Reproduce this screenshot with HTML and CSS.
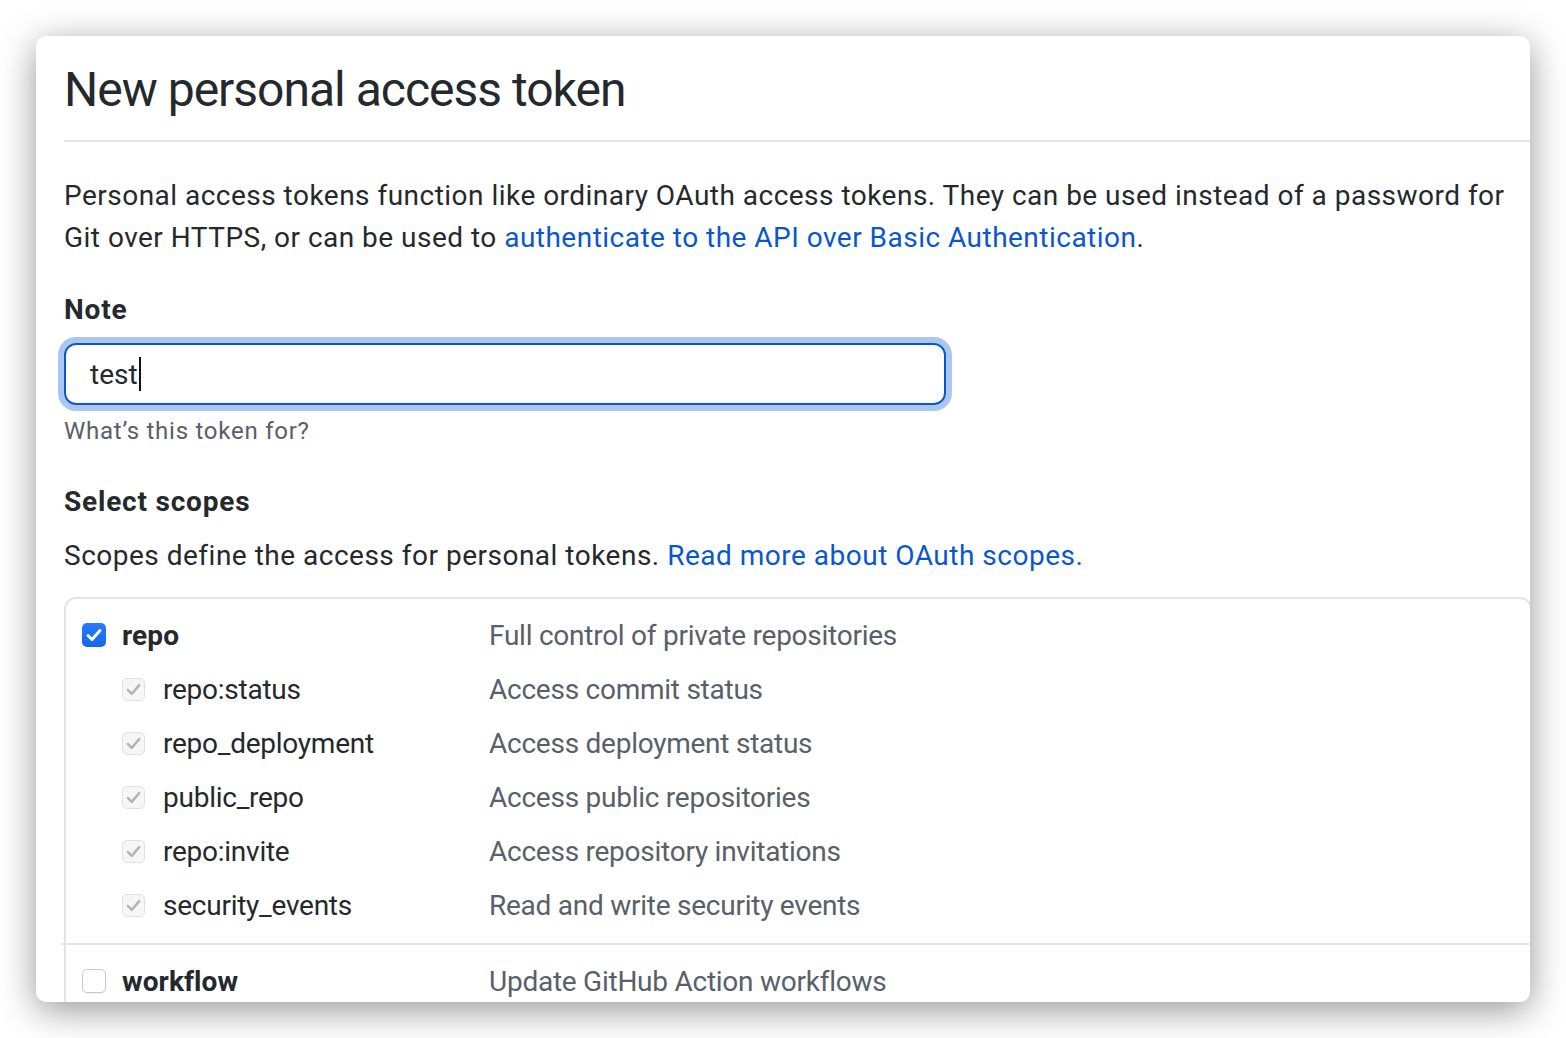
FILE: index.html
```html
<!DOCTYPE html>
<html lang="en">
<head>
<meta charset="utf-8">
<title>New personal access token</title>
<link rel="stylesheet" href="styles.css">
</head>
<body>
<div class="window">
  <div class="content">
    <h2 class="subhead">New personal access token</h2>
    <p class="intro">Personal access tokens function like ordinary OAuth access tokens. They can be used instead of a password for Git over HTTPS, or can be used to <a href="#">authenticate to the API over Basic Authentication</a>.</p>

    <label class="label">Note</label>
    <div class="input"><span class="value">test</span><span class="caret"></span></div>
    <p class="note">What’s this token for?</p>

    <h3 class="label scopes-title">Select scopes</h3>
    <p class="scopes-desc">Scopes define the access for personal tokens. <a href="#">Read more about OAuth scopes.</a></p>

    <div class="scopes">
      <div class="group">
        <div class="row">
          <span class="name top"><span class="cb cb-on"><svg viewBox="0 0 24 24" width="24" height="24"><path d="M6 12.5l4 4L18 7.5" fill="none" stroke="#fff" stroke-width="3" stroke-linecap="round" stroke-linejoin="round"/></svg></span>repo</span>
          <span class="desc">Full control of private repositories</span>
        </div>
        <div class="row">
          <span class="name sub"><span class="cb cb-dis"><svg viewBox="0 0 24 24" width="23" height="23"><path d="M5.5 12.5l4.5 4.5L18.5 7" fill="none" stroke="#b4b4b4" stroke-width="2.8" stroke-linecap="round" stroke-linejoin="round"/></svg></span>repo:status</span>
          <span class="desc">Access commit status</span>
        </div>
        <div class="row">
          <span class="name sub"><span class="cb cb-dis"><svg viewBox="0 0 24 24" width="23" height="23"><path d="M5.5 12.5l4.5 4.5L18.5 7" fill="none" stroke="#b4b4b4" stroke-width="2.8" stroke-linecap="round" stroke-linejoin="round"/></svg></span>repo_deployment</span>
          <span class="desc">Access deployment status</span>
        </div>
        <div class="row">
          <span class="name sub"><span class="cb cb-dis"><svg viewBox="0 0 24 24" width="23" height="23"><path d="M5.5 12.5l4.5 4.5L18.5 7" fill="none" stroke="#b4b4b4" stroke-width="2.8" stroke-linecap="round" stroke-linejoin="round"/></svg></span>public_repo</span>
          <span class="desc">Access public repositories</span>
        </div>
        <div class="row">
          <span class="name sub"><span class="cb cb-dis"><svg viewBox="0 0 24 24" width="23" height="23"><path d="M5.5 12.5l4.5 4.5L18.5 7" fill="none" stroke="#b4b4b4" stroke-width="2.8" stroke-linecap="round" stroke-linejoin="round"/></svg></span>repo:invite</span>
          <span class="desc">Access repository invitations</span>
        </div>
        <div class="row">
          <span class="name sub"><span class="cb cb-dis"><svg viewBox="0 0 24 24" width="23" height="23"><path d="M5.5 12.5l4.5 4.5L18.5 7" fill="none" stroke="#b4b4b4" stroke-width="2.8" stroke-linecap="round" stroke-linejoin="round"/></svg></span>security_events</span>
          <span class="desc">Read and write security events</span>
        </div>
      </div>
      <div class="group group-next">
        <div class="row">
          <span class="name top"><span class="cb cb-off"></span>workflow</span>
          <span class="desc">Update GitHub Action workflows</span>
        </div>
      </div>
    </div>
  </div>
</div>
</body>
</html>
```

FILE: styles.css
```css
html, body {
  margin: 0;
  padding: 0;
  background: #ffffff;
}

body {
  padding: 36px 0 36px 36px;
  font-family: Roboto, "Liberation Sans", sans-serif;
  color: #24292e;
}

.window {
  width: 1494px;
  height: 966px;
  background: #fff;
  border-radius: 10px;
  overflow: hidden;
  box-shadow: 0 8px 36px rgba(0, 0, 0, 0.42);
  box-sizing: border-box;
  padding: 24px 0 0 28px;
}

.content {
  width: 1468px;
}

.subhead {
  margin: 0;
  font-size: 48px;
  font-weight: 400;
  line-height: 60px;
  letter-spacing: -1px;
  padding-bottom: 20px;
  border-bottom: 2px solid #e1e4e8;
}

.intro {
  margin: 33px 0 0;
  width: 1450px;
  font-size: 28px;
  line-height: 42px;
  letter-spacing: 0.48px;
}

a {
  color: #0a56d0;
  text-decoration: none;
}

.label {
  display: block;
  margin: 30px 0 0;
  font-size: 28px;
  line-height: 42px;
  font-weight: 700;
  letter-spacing: 0.8px;
}

.input {
  margin-top: 12px;
  width: 882px;
  height: 62px;
  box-sizing: border-box;
  border: 2px solid #0a56d0;
  border-radius: 12px;
  box-shadow: 0 0 0 6px rgba(20, 100, 220, 0.36);
  padding-left: 24px;
  display: flex;
  align-items: center;
  font-size: 28px;
  color: #24292e;
}

.caret {
  display: inline-block;
  width: 2px;
  height: 34px;
  background: #111;
  margin-left: 1px;
}

.note {
  margin: 8px 0 0;
  font-size: 24px;
  line-height: 36px;
  letter-spacing: 0.75px;
  color: #586069;
}

.scopes-title {
  margin-top: 32px;
}

.scopes-desc {
  margin: 12px 0 0;
  font-size: 28px;
  line-height: 42px;
  letter-spacing: 0.5px;
}

.scopes {
  margin-top: 20px;
  border: 2px solid #e1e4e8;
  border-radius: 12px;
}

.group {
  padding: 9px 0 11px;
}

.group-next {
  border-top: 2px solid #e1e4e8;
  margin-left: -4px;
  padding-left: 4px;
}

.row {
  height: 54px;
  display: flex;
  align-items: center;
  padding-left: 16px;
  font-size: 28px;
  letter-spacing: -0.25px;
}

.name {
  display: flex;
  align-items: center;
  width: 407px;
  flex-shrink: 0;
  box-sizing: border-box;
}

.name.top {
  font-weight: 700;
  letter-spacing: 0.1px;
}

.name.sub {
  padding-left: 40px;
}

.desc {
  color: #586069;
}

.cb {
  display: inline-flex;
  align-items: center;
  justify-content: center;
  box-sizing: border-box;
  flex-shrink: 0;
}

.cb-on {
  width: 24px;
  height: 24px;
  border-radius: 5px;
  background: linear-gradient(#2a7cfb, #1466f0);
  margin-right: 16px;
}

.cb-dis {
  width: 23px;
  height: 23px;
  border-radius: 5px;
  border: 1px solid #e0e0e0;
  background: #f6f6f6;
  margin-right: 18px;
}

.cb-off {
  width: 24px;
  height: 24px;
  border-radius: 5px;
  border: 1px solid #c8c8c8;
  background: #fff;
  margin-right: 16px;
  box-shadow: 0 1px 1px rgba(0, 0, 0, 0.05);
}
```
